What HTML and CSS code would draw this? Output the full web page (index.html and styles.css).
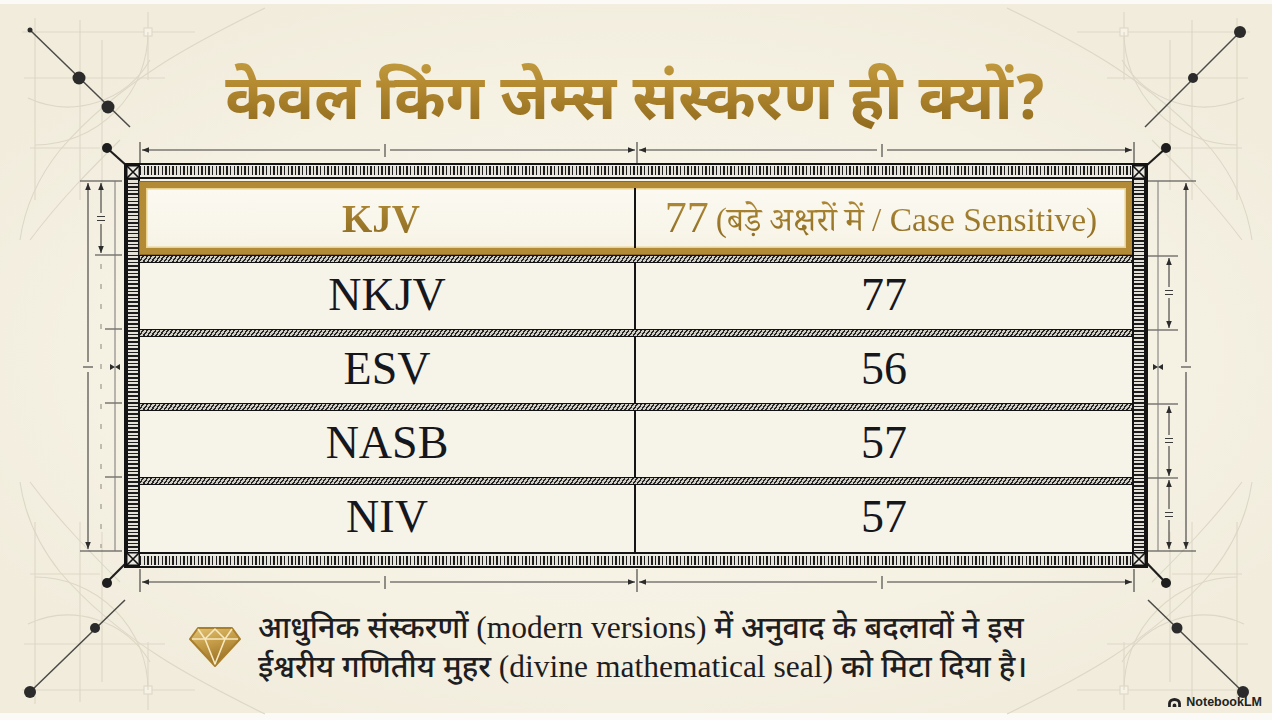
FILE: index.html
```html
<!DOCTYPE html>
<html lang="hi">
<head>
<meta charset="utf-8">
<title>केवल किंग जेम्स संस्करण ही क्यों?</title>
<link rel="stylesheet" href="styles.css">
</head>
<body>
<div class="page">
  <svg class="deco" viewBox="0 0 1272 720" width="1272" height="720" aria-hidden="true">
    <defs>
      <marker id="ah" viewBox="0 0 10 10" refX="10" refY="5" markerWidth="7" markerHeight="7" orient="auto-start-reverse" markerUnits="userSpaceOnUse">
        <path d="M0 1 L10 5 L0 9 Z" fill="#2c2c2c"/>
      </marker>
      <g id="faint">
        <path d="M35 18 V200 M80 20 V200 M102 40 V190 M148 12 V80 M22 32 H195 M24 78 H165 M30 148 H100" />
        <rect x="144" y="28" width="8" height="8" fill="#f6f2e6"/>
        <path d="M148 32 A113 113 0 0 1 35 145" />
        <path d="M150 60 A95 95 0 0 1 28 98" />
        <path d="M265 8 C200 40 120 80 60 150 C40 175 25 205 20 240" />
        <path d="M120 140 C90 170 60 200 30 240" />
      </g>
    </defs>

    <g class="faint">
      <use href="#faint"/>
      <use href="#faint" transform="translate(1272,0) scale(-1,1)"/>
      <use href="#faint" transform="translate(0,722) scale(1,-1)"/>
      <use href="#faint" transform="translate(1272,722) scale(-1,-1)"/>
    </g>

    <g class="diag">
      <path d="M30 30 L130 127"/>
      <circle cx="30" cy="30" r="2.5"/>
      <circle cx="79" cy="78" r="6.5"/>
      <circle cx="108" cy="107" r="6.5"/>

      <path d="M1240 32 L1145 127"/>
      <circle cx="1240" cy="32" r="6"/>
      <circle cx="1193" cy="78" r="5"/>

      <path d="M30 692 L125 600"/>
      <circle cx="30" cy="692" r="6"/>
      <circle cx="95" cy="628" r="5"/>

      <path d="M1148 600 L1243 692"/>
      <circle cx="1177" cy="628" r="5.5"/>
      <circle cx="1243" cy="692" r="6"/>
    </g>

    <g class="lead">
      <path d="M107 148 L127 166"/>
      <circle cx="107" cy="148" r="5"/>
      <path d="M1166 148 L1146 166"/>
      <circle cx="1166" cy="148" r="5"/>
      <path d="M107 582 L132 557"/>
      <circle cx="107" cy="583" r="5"/>
      <path d="M1166 583 L1141 557"/>
      <circle cx="1166" cy="583" r="5"/>
    </g>

    <g class="dim">
      <path d="M140 142 V163 M637 142 V163 M1134 142 V163"/>
      <path d="M142 150 H380" marker-start="url(#ah)"/>
      <path d="M390 150 H635" marker-end="url(#ah)"/>
      <path d="M385 144 V157"/>
      <path d="M639 150 H877" marker-start="url(#ah)"/>
      <path d="M887 150 H1132" marker-end="url(#ah)"/>
      <path d="M882 144 V157"/>

      <path d="M140 569 V592 M637 569 V592 M1134 569 V592"/>
      <path d="M142 582 H380" marker-start="url(#ah)"/>
      <path d="M390 582 H635" marker-end="url(#ah)"/>
      <path d="M385 576 V589"/>
      <path d="M639 582 H877" marker-start="url(#ah)"/>
      <path d="M887 582 H1132" marker-end="url(#ah)"/>
      <path d="M882 576 V589"/>

      <path d="M80 181 H122 M95 255 H122 M105 329 H122 M105 403 H122 M105 477 H122 M80 551 H122"/>
      <path d="M88 183 V362" marker-start="url(#ah)"/>
      <path d="M88 372 V549" marker-end="url(#ah)"/>
      <path d="M83 367 H93"/>
      <path d="M101 183 V213" marker-start="url(#ah)"/>
      <path d="M101 224 V253" marker-end="url(#ah)"/>
      <path d="M97 216.5 H105 M97 220.5 H105"/>
      <path class="dash" d="M101 264 V548"/>
      <path class="thin" d="M115 181 V551"/>
      <path d="M110 364 L115 367 L110 370 Z M120 364 L115 367 L120 370 Z" class="fill"/>

      <path d="M1148 181 H1196 M1148 256 H1178 M1148 330 H1178 M1148 404 H1178 M1148 478 H1178 M1148 551 H1196"/>
      <path d="M1186 183 V362" marker-start="url(#ah)"/>
      <path d="M1186 372 V549" marker-end="url(#ah)"/>
      <path d="M1181 367 H1191"/>
      <path d="M1169 258 V287" marker-start="url(#ah)"/>
      <path d="M1169 298 V328" marker-end="url(#ah)"/>
      <path d="M1165 290.5 H1173 M1165 294.5 H1173"/>
      <path d="M1169 406 V435" marker-start="url(#ah)"/>
      <path d="M1169 446 V476" marker-end="url(#ah)"/>
      <path d="M1165 438.5 H1173 M1165 442.5 H1173"/>
      <path d="M1169 480 V509" marker-start="url(#ah)"/>
      <path d="M1169 520 V549" marker-end="url(#ah)"/>
      <path d="M1165 512.5 H1173 M1165 516.5 H1173"/>
      <path class="thin" d="M1158 181 V551"/>
      <path d="M1153 364 L1158 367 L1153 370 Z M1163 364 L1158 367 L1163 370 Z" class="fill"/>
    </g>
  </svg>

  <h1 class="title">केवल किंग जेम्स संस्करण ही क्यों?</h1>

  <div class="frame">
    <div class="hband top">
      <span class="corner"><svg viewBox="0 0 14 14" width="14" height="14"><rect x="0.75" y="0.75" width="12.5" height="12.5" fill="#e9e7de" stroke="#111" stroke-width="1.5"/><path d="M1 1 L13 13 M13 1 L1 13" stroke="#111" stroke-width="1.6"/></svg></span>
      <span class="hstripe"></span>
      <span class="corner"><svg viewBox="0 0 14 14" width="14" height="14"><rect x="0.75" y="0.75" width="12.5" height="12.5" fill="#e9e7de" stroke="#111" stroke-width="1.5"/><path d="M1 1 L13 13 M13 1 L1 13" stroke="#111" stroke-width="1.6"/></svg></span>
    </div>
    <div class="mid">
      <span class="vstripe left"></span>
      <div class="tbl">
        <div class="hdr">
          <div class="cell hcell first"><span class="kjv">KJV</span></div>
          <div class="cell hcell"><span class="big77">77</span><span class="note77">(बड़े अक्षरों में / Case Sensitive)</span></div>
        </div>
        <div class="rope"></div>
        <div class="row"><div class="cell first">NKJV</div><div class="cell">77</div></div>
        <div class="rope"></div>
        <div class="row"><div class="cell first">ESV</div><div class="cell">56</div></div>
        <div class="rope"></div>
        <div class="row"><div class="cell first">NASB</div><div class="cell">57</div></div>
        <div class="rope"></div>
        <div class="row last"><div class="cell first">NIV</div><div class="cell">57</div></div>
      </div>
      <span class="vstripe right"></span>
    </div>
    <div class="hband bottom">
      <span class="corner"><svg viewBox="0 0 14 14" width="14" height="14"><rect x="0.75" y="0.75" width="12.5" height="12.5" fill="#e9e7de" stroke="#111" stroke-width="1.5"/><path d="M1 1 L13 13 M13 1 L1 13" stroke="#111" stroke-width="1.6"/></svg></span>
      <span class="hstripe"></span>
      <span class="corner"><svg viewBox="0 0 14 14" width="14" height="14"><rect x="0.75" y="0.75" width="12.5" height="12.5" fill="#e9e7de" stroke="#111" stroke-width="1.5"/><path d="M1 1 L13 13 M13 1 L1 13" stroke="#111" stroke-width="1.6"/></svg></span>
    </div>
  </div>

  <div class="note">
    <svg class="gem" viewBox="0 0 54 42" width="54" height="42" aria-hidden="true">
      <defs>
        <linearGradient id="gold" x1="0" y1="0" x2="0.4" y2="1">
          <stop offset="0" stop-color="#e4c677"/>
          <stop offset="0.5" stop-color="#c39a45"/>
          <stop offset="1" stop-color="#9a7125"/>
        </linearGradient>
      </defs>
      <path d="M10 2 H44 L52 13 L27 40 L2 13 Z" fill="url(#gold)" stroke="#a97f2c" stroke-width="2" stroke-linejoin="round"/>
      <path d="M4 13 H50 M10 3 L17 13 L27 3 L37 13 L44 3 M17 13 L27 38 L37 13" fill="none" stroke="#f6e8bf" stroke-width="1.6" stroke-linejoin="round"/>
    </svg>
    <p class="note-text">आधुनिक संस्करणों <span class="en">(modern versions)</span> में अनुवाद के बदलावों ने इस<br>ईश्वरीय गणितीय मुहर <span class="en">(divine mathematical seal)</span> को मिटा दिया है।</p>
  </div>

  <div class="brand">
    <svg viewBox="0 0 16 12" width="15" height="11" aria-hidden="true"><path d="M1 11 V7 A7 6 0 0 1 15 7 V11 H12 V8 A4 3.6 0 0 0 4 8 V11 Z M6 11 V9 A2 2 0 0 1 10 9 V11 Z" fill="#222"/></svg>
    <span>NotebookLM</span>
  </div>
</div>
</body>
</html>
```

FILE: styles.css
```css
* { box-sizing: border-box; }

html, body {
  margin: 0;
  padding: 0;
}

body {
  width: 1272px;
  height: 720px;
  overflow: hidden;
  font-family: "Noto Sans Devanagari", "Noto Sans", sans-serif;
}

.page {
  position: relative;
  width: 1272px;
  height: 720px;
  display: flex;
  flex-direction: column;
  align-items: center;
  background:
    radial-gradient(ellipse 60% 55% at 50% 50%, #f8f5ea 0%, #f5f1e3 70%, #f1ecdc 100%);
  box-shadow: inset 0 4px 0 #fbfaf6, inset 0 -7px 0 #fbfaf6;
}

.deco {
  position: absolute;
  left: 0;
  top: 0;
  z-index: 0;
  pointer-events: none;
}

.faint {
  fill: none;
  stroke: #ddd7c6;
  stroke-width: 1.1;
}

.diag path { stroke: #4a4a46; stroke-width: 1.5; fill: none; }
.diag circle { fill: #2b2b2b; }
.lead path { stroke: #1e1e1e; stroke-width: 2.2; fill: none; }
.lead circle { fill: #1e1e1e; }

.dim path {
  stroke: #3c3c3a;
  stroke-width: 1.1;
  fill: none;
}
.dim path.thin { stroke: #777; stroke-width: 1; }
.dim path.dash { stroke: #a9a69b; stroke-width: 1.4; stroke-dasharray: 5 15; }
.dim path.fill { fill: #2c2c2c; stroke: none; }

.title {
  position: relative;
  z-index: 1;
  margin: 0;
  height: 163px;
  padding-top: 54px;
  line-height: 100px;
  font-size: 62px;
  font-weight: 700;
  letter-spacing: 0;
  white-space: nowrap;
  background: linear-gradient(180deg, #cba748 25%, #b48a31 52%, #8f6a1d 80%);
  -webkit-background-clip: text;
  background-clip: text;
  color: transparent;
}

/* ---------- table frame ---------- */
.frame {
  position: relative;
  z-index: 1;
  width: 1024px;
  height: 405px;
  border: 2px solid #141414;
  display: flex;
  flex-direction: column;
  background: #ecebe4;
}

.hband {
  display: flex;
  height: 14px;
  flex: none;
}

.corner {
  width: 14px;
  height: 14px;
  flex: none;
  display: block;
}
.corner svg { display: block; }

.hstripe {
  flex: 1;
  height: 14px;
  background: repeating-linear-gradient(90deg, #1d1d1d 0 1.5px, #e4e2d8 1.5px 3.6px);
  background-clip: content-box;
}
.hband.top .hstripe {
  padding: 1px 0 2px;
  border-bottom: 2px solid #141414;
}
.hband.bottom .hstripe {
  padding: 2px 0 1px;
  border-top: 2px solid #141414;
}

.mid {
  flex: 1;
  display: flex;
  min-height: 0;
}

.vstripe {
  width: 14px;
  flex: none;
  background: repeating-linear-gradient(180deg, #1d1d1d 0 1.5px, #e4e2d8 1.5px 3.6px);
  background-clip: content-box;
  border-left: 2px solid #141414;
  border-right: 2px solid #141414;
}

.tbl {
  flex: 1;
  display: flex;
  flex-direction: column;
  padding-top: 3px;
  background: #f6f3e9;
  font-family: "Liberation Serif", "Noto Serif Devanagari", serif;
}

.hdr {
  height: 72px;
  flex: none;
  display: grid;
  grid-template-columns: 1fr 1fr;
  border: 6px solid #b38b36;
  box-shadow: inset 0 0 0 1.5px #ead391, 0 0 0 1px #8d6a22;
  background: linear-gradient(180deg, #fbf9f1, #f7f3e6);
}

.rope {
  height: 8px;
  flex: none;
  border-top: 1.5px solid #111;
  border-bottom: 1.5px solid #111;
  background: repeating-linear-gradient(-55deg, #262626 0 1.4px, #cfcdc4 1.4px 3.4px);
}
.hdr + .rope { margin-top: 1px; }

.row {
  height: 66px;
  flex: none;
  display: grid;
  grid-template-columns: 1fr 1fr;
}
.row.last { flex: 1; }

.cell {
  display: flex;
  align-items: center;
  justify-content: center;
  font-size: 46px;
  color: #16171d;
  line-height: 1;
  padding-bottom: 3px;
}
.cell.first {
  border-right: 2px solid #141414;
}

.hcell {
  padding-bottom: 0;
  background: linear-gradient(180deg, #b8913c, #86661e);
  -webkit-background-clip: text;
  background-clip: text;
  color: transparent;
}
.hcell.first { border-right: 2px solid #141414; padding-right: 18px; }

.kjv {
  font-size: 39px;
  font-weight: 700;
}
.big77 {
  font-size: 44px;
  margin-right: 7px;
}
.note77 {
  font-size: 33.5px;
  padding-top: 4px;
}

/* ---------- note ---------- */
.note {
  position: relative;
  z-index: 1;
  align-self: flex-start;
  margin-left: 188px;
  margin-top: 42px;
  display: flex;
  align-items: center;
  gap: 16px;
}

.gem { flex: none; margin-top: -4px; }

.note-text {
  margin: 0;
  font-size: 30.5px;
  line-height: 36px;
  font-weight: 500;
  color: #1d1d22;
  white-space: nowrap;
}
.note-text .en {
  font-family: "Liberation Serif", serif;
  font-weight: 400;
  font-size: 31.5px;
}

.brand {
  position: absolute;
  right: 10px;
  bottom: 11px;
  z-index: 2;
  display: flex;
  align-items: center;
  gap: 4px;
  font-family: "Liberation Sans", Arial, sans-serif;
  font-size: 12.5px;
  font-weight: 700;
  color: #222;
}
.brand svg { display: block; }
```
